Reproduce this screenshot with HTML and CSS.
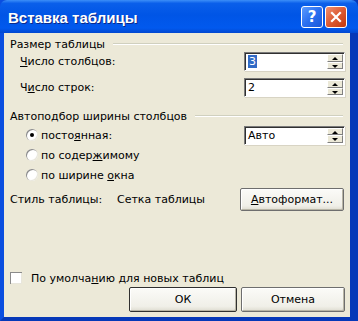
FILE: index.html
```html
<!DOCTYPE html>
<html lang="ru">
<head>
    <meta charset="UTF-8">
    <title>Вставка таблицы</title>
    <link rel="stylesheet" href="styles.css">
</head>
<body>
    <div class="window">
        <div class="titlebar">
            <span class="title">Вставка таблицы</span>
            <div class="title-buttons">
                <span class="tbtn help">?</span>
                <span class="tbtn close">
                    <svg width="12" height="12" viewBox="0 0 12 12">
                        <path d="M2 2 L10 10 M10 2 L2 10" stroke="#fff" stroke-width="2.2" stroke-linecap="square"/>
                    </svg>
                </span>
            </div>
        </div>

        <div class="body">
            <div class="group-head"><span>Размер таблицы</span></div>
            <div class="row first">
                <span class="label"><u>Ч</u>исло столбцов:</span>
                <div class="spin">
                    <span class="field"><span class="sel">3</span></span>
                    <span class="arrows"><span class="up"></span><span class="down"></span></span>
                </div>
            </div>
            <div class="row second">
                <span class="label">Ч<u>и</u>сло строк:</span>
                <div class="spin">
                    <span class="field">2</span>
                    <span class="arrows"><span class="up"></span><span class="down"></span></span>
                </div>
            </div>

            <div class="group-head auto"><span>Автоподбор ширины столбцов</span></div>
            <div class="radio-row">
                <span class="radio checked"></span>
                <span class="radio-text">посто<u>я</u>нная:</span>
                <div class="spin combo">
                    <span class="field">Авто</span>
                    <span class="arrows"><span class="up"></span><span class="down"></span></span>
                </div>
            </div>
            <div class="radio-row">
                <span class="radio"></span>
                <span class="radio-text">по содер<u>ж</u>имому</span>
            </div>
            <div class="radio-row">
                <span class="radio"></span>
                <span class="radio-text">по ширине <u>о</u>кна</span>
            </div>

            <div class="style-row">
                <span class="style-label">Стиль таблицы:</span>
                <span class="style-value">Сетка таблицы</span>
                <span class="button auto-btn"><u>А</u>втоформат...</span>
            </div>

            <div class="check-row">
                <span class="checkbox"></span>
                <span>По умолча<u>н</u>ию для новых таблиц</span>
            </div>
            <div class="buttons">
                <span class="button ok">ОК</span>
                <span class="button cancel">Отмена</span>
            </div>
        </div>
    </div>
</body>
</html>
```

FILE: styles.css
```css
body {
    margin: 0;
    padding: 0;
    font-family: "DejaVu Sans", sans-serif;
    font-size: 11px;
    color: #000;
    background: #fff;
}
u {
    text-decoration: underline;
    text-underline-offset: 1px;
}
.window {
    width: 358px;
    height: 321px;
    box-sizing: border-box;
    display: flex;
    flex-direction: column;
    background: #0842c8;
    border-left: 4px solid #0a4ee0;
    border-right: 8px solid #0638b8;
    border-bottom: 4px solid #0638b8;
}
.titlebar {
    height: 33px;
    margin-left: -4px;
    margin-right: -8px;
    padding: 0 11px 0 8px;
    display: flex;
    align-items: center;
    justify-content: space-between;
    background: linear-gradient(to bottom, #3c8ff8 0%, #0a5fea 10%, #0055e6 45%, #0159ee 85%, #0248d0 100%);
    border-radius: 7px 7px 0 0;
}
.title {
    color: #fff;
    font-family: "Liberation Sans", sans-serif;
    font-weight: bold;
    font-size: 15px;
    text-shadow: 1px 1px 0 #0b2a8a;
    margin-top: 1px;
}
.title-buttons {
    display: flex;
    gap: 2px;
    margin-top: 1px;
}
.tbtn {
    width: 20px;
    height: 20px;
    border: 1px solid #fff;
    border-radius: 3px;
    display: flex;
    align-items: center;
    justify-content: center;
    color: #fff;
    font-weight: bold;
    font-size: 15px;
}
.help {
    background: linear-gradient(135deg, #5c9cff 0%, #2a6ff0 50%, #1a56d8 100%);
}
.close {
    background: linear-gradient(135deg, #f09070 0%, #dc5a32 50%, #c2380e 100%);
}
.body {
    flex: 1;
    display: flex;
    flex-direction: column;
    background: #ece9d8;
    padding: 0 5px 5px 6px;
}
.group-head {
    display: flex;
    align-items: center;
    height: 16px;
    margin-top: 3px;
}
.group-head::after {
    content: "";
    flex: 1;
    height: 0;
    border-top: 1px solid #d0d0bf;
    border-bottom: 1px solid #fff;
    margin: 0 2px 0 8px;
}
.group-head.auto {
    margin-top: 11px;
}
.row {
    display: flex;
    align-items: center;
    justify-content: space-between;
    height: 19px;
    padding-left: 10px;
}
.row.second {
    margin-top: 7px;
}
.spin {
    width: 101px;
    height: 19px;
    box-sizing: border-box;
    display: flex;
    background: #fff;
    border-top: 1px solid #7a7a7a;
    border-left: 1px solid #7a7a7a;
    border-right: 1px solid #fff;
    border-bottom: 1px solid #fff;
    box-shadow: inset 1px 1px 0 #303030, 1px 1px 0 #d8d4c4;
}
.field {
    flex: 1;
    padding: 2px 0 0 3px;
    line-height: 13px;
}
.sel {
    background: #316ac5;
    color: #fff;
    padding: 0 1px;
}
.arrows {
    width: 16px;
    display: flex;
    flex-direction: column;
    margin: 1px 1px 1px 0;
}
.arrows span {
    flex: 1;
    background: #ece9d8;
    border-top: 1px solid #fff;
    border-left: 1px solid #fff;
    border-right: 1px solid #808080;
    border-bottom: 1px solid #808080;
    position: relative;
}
.arrows span::after {
    content: "";
    position: absolute;
    left: 4px;
    top: 2px;
    border-left: 3px solid transparent;
    border-right: 3px solid transparent;
}
.arrows .up::after {
    border-bottom: 3px solid #000;
}
.arrows .down::after {
    border-top: 3px solid #000;
}
.radio-row {
    display: flex;
    align-items: center;
    height: 20px;
    padding-left: 16px;
}
.group-head.auto + .radio-row {
    margin-top: 1px;
}
.radio {
    width: 12px;
    height: 12px;
    border-radius: 50%;
    background: #fff;
    box-shadow: inset 1px 1px 0 #8a8a8a, inset -1px -1px 0 #e8e6dc;
    margin-right: 3px;
    display: flex;
    align-items: center;
    justify-content: center;
}
.radio.checked::after {
    content: "";
    width: 4px;
    height: 4px;
    border-radius: 50%;
    background: #000;
}
.radio-text {
    flex: 1;
}
.combo {
    margin-left: auto;
}
.style-row {
    display: flex;
    align-items: center;
    height: 23px;
    margin-top: 3px;
}
.style-label {
    width: 107px;
}
.style-value {
    flex: 1;
}
.button {
    box-sizing: border-box;
    display: flex;
    align-items: center;
    justify-content: center;
    height: 23px;
    background: linear-gradient(to bottom, #fbfbf8 0%, #f0efe8 80%, #dedcd0 100%);
    border: 1px solid #6e6e6e;
    border-radius: 2px;
    box-shadow: inset 1px 1px 0 #fff, inset -1px -1px 0 #b8b5a6;
}
.auto-btn {
    width: 104px;
    margin-right: 1px;
}
.check-row {
    margin-top: auto;
    display: flex;
    align-items: center;
    height: 16px;
    margin-bottom: 1px;
}
.checkbox {
    width: 12px;
    height: 12px;
    background: #fff;
    box-shadow: inset 1px 1px 0 #8a8a8a, inset -1px -1px 0 #e8e6dc;
    margin-right: 9px;
}
.buttons {
    display: flex;
    justify-content: flex-end;
    gap: 4px;
    height: 25px;
}
.buttons .button {
    height: 25px;
}
.ok {
    width: 108px;
    border-color: #303030;
}
.cancel {
    width: 104px;
}
```
